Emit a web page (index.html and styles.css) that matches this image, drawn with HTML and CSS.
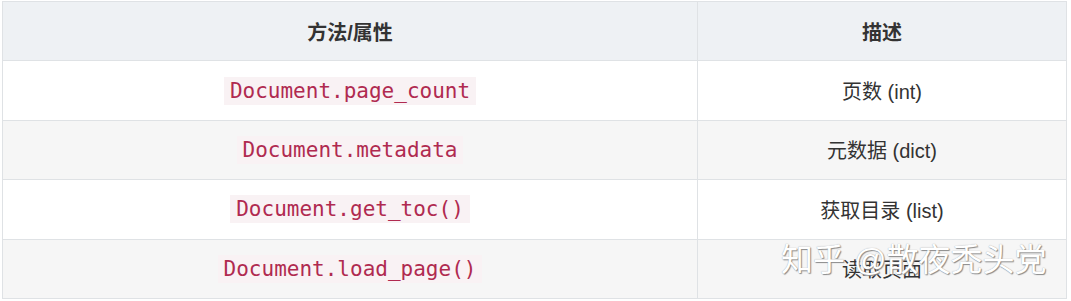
FILE: index.html
```html
<!DOCTYPE html>
<html lang="zh-CN">
<head>
<meta charset="utf-8">
<title>PyMuPDF Document</title>
<link rel="stylesheet" href="styles.css">
</head>
<body>
<div class="wrap">
  <table class="tbl">
    <colgroup>
      <col class="c1">
      <col class="c2">
    </colgroup>
    <thead>
      <tr><th>方法/属性</th><th>描述</th></tr>
    </thead>
    <tbody>
      <tr><td><code>Document.page_count</code></td><td>页数 (int)</td></tr>
      <tr><td><code>Document.metadata</code></td><td>元数据 (dict)</td></tr>
      <tr><td><code>Document.get_toc()</code></td><td>获取目录 (list)</td></tr>
      <tr><td><code>Document.load_page()</code></td><td>读取页面</td></tr>
    </tbody>
  </table>
  <div class="watermark">知乎 @散夜秃头党</div>
</div>
</body>
</html>
```

FILE: styles.css
```css
html, body {
  margin: 0;
  padding: 0;
  background: #ffffff;
}

.wrap {
  position: relative;
  padding: 1px 0 0 2px;
  width: 1064px;
}

.tbl {
  border-collapse: collapse;
  width: 1064px;
  table-layout: fixed;
  font-family: "Liberation Sans", "Noto Sans CJK SC", sans-serif;
  font-size: 20px;
  color: #333333;
}

.c1 { width: 695px; }
.c2 { width: 369px; }

.tbl th,
.tbl td {
  border: 1px solid #dfe2e5;
  height: 59.4px;
  padding: 0 12px;
  text-align: center;
  vertical-align: middle;
  box-sizing: border-box;
}

.tbl th {
  background: #eef1f4;
  font-weight: bold;
  color: #333333;
}

.tbl tbody tr:nth-child(odd) td { background: #ffffff; }
.tbl tbody tr:nth-child(even) td { background: #f6f6f6; }

.tbl code {
  font-family: "DejaVu Sans Mono", monospace;
  font-size: 21px;
  color: #b02a50;
  background: #f9f2f4;
  padding: 2px 6px;
}

.watermark {
  position: absolute;
  left: 781px;
  top: 234px;
  font-family: "Liberation Sans", "Noto Sans CJK SC", sans-serif;
  font-size: 32px;
  color: #ffffff;
  text-shadow: 1px 1px 1px #8a8a8a, 0 0 1px #9a9a9a;
  white-space: nowrap;
}
```
